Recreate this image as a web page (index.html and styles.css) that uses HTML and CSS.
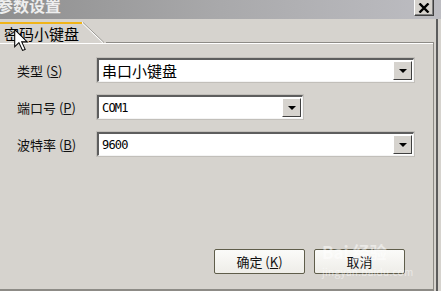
FILE: index.html
```html
<!DOCTYPE html>
<html>
<head>
<meta charset="utf-8">
<link rel="stylesheet" href="styles.css">
</head>
<body>
<div class="dialog">
  <div class="titlebar">
    <span class="title">参数设置</span>
    <span class="close"><svg width="12" height="10" viewBox="0 0 12 10"><path d="M1.5 0.5 L10.5 9.5 M10.5 0.5 L1.5 9.5" stroke="#000" stroke-width="2.4"/></svg></span>
  </div>
  <div class="content">
    <div class="panelwrap">
      <div class="tabstrip">
        <div class="tab">密码小键盘</div>
        <svg class="slant" width="24" height="24" viewBox="0 0 24 24"><path d="M0 3.5 L21 23.5" stroke="#ffffff" stroke-width="1.2"/><path d="M1 3.5 L22 23.5" stroke="#9a9892" stroke-width="1"/></svg>
        <div class="tabrest"></div>
      </div>
      <div class="panel">
        <div class="row">
          <span class="label">类型 (<u>S</u>)</span>
          <div class="combo wide"><span class="val cjk">串口小键盘</span><span class="btn"><i class="tri"></i></span></div>
        </div>
        <div class="row">
          <span class="label">端口号 (<u>P</u>)</span>
          <div class="combo narrow"><span class="val mono">COM1</span><span class="btn"><i class="tri"></i></span></div>
        </div>
        <div class="row">
          <span class="label">波特率 (<u>B</u>)</span>
          <div class="combo wide"><span class="val mono">9600</span><span class="btn"><i class="tri"></i></span></div>
        </div>
        <div class="buttons">
          <button class="pbtn">确定 (<u>K</u>)</button>
          <button class="pbtn">取消</button>
        </div>
      </div>
    </div>
    <div class="edge"></div>
  </div>
  <svg class="cursor" width="15" height="23" viewBox="0 0 14 22"><path d="M0.5 0.5 L0.5 17 L4.5 13 L8 20.5 L10.5 19.5 L7.2 12.3 L12.5 12.3 Z" fill="#fff" stroke="#000" stroke-width="1"/></svg>
  <div class="watermark"><span class="wm1">Bai 经验</span><span class="wm2">jingyan.baidu.com</span></div>
</div>
</body>
</html>
```

FILE: styles.css
```css
* { box-sizing: border-box; }
html, body { margin: 0; padding: 0; }
body {
  width: 441px;
  height: 291px;
  overflow: hidden;
  background: #d6d3ce;
  font-family: "Noto Sans CJK SC", "Liberation Sans", sans-serif;
}
.dialog {
  position: relative;
  width: 441px;
  height: 291px;
  display: flex;
  flex-direction: column;
}
.titlebar {
  height: 19px;
  flex: none;
  display: flex;
  justify-content: space-between;
  align-items: flex-start;
  background: linear-gradient(to right, #8f8f8f, #a9a9ab 50%, #bdbdc2);
  overflow: hidden;
}
.title {
  margin-left: -3px;
  margin-top: -5px;
  font-size: 16px;
  font-weight: bold;
  color: #eeeeee;
  line-height: 20px;
}
.close {
  width: 20px;
  height: 16px;
  margin-right: 7px;
  background: #d6d3ce;
  border-right: 1px solid #404040;
  border-bottom: 1px solid #404040;
  border-left: 1px solid #ffffff;
  box-shadow: inset -1px -1px #808080;
  display: flex;
  align-items: center;
  justify-content: center;
}
.content {
  flex: 1;
  display: flex;
  min-height: 0;
}
.panelwrap {
  width: 434px;
  flex: none;
  display: flex;
  flex-direction: column;
}
.tabstrip {
  height: 24px;
  flex: none;
  display: flex;
  align-items: stretch;
}
.tab {
  width: 82px;
  flex: none;
  margin-top: 3px;
  border-top: 2px solid #f0b418;
  font-size: 15px;
  line-height: 17px;
  padding-left: 4px;
  padding-top: 1px;
  color: #000;
  white-space: nowrap;
}
.slant { flex: none; }
.tabrest {
  flex: 1;
  border-bottom: 1px solid #8d8b86;
}
.panel {
  flex: 1;
  border-right: 1px solid #8d8b86;
  border-bottom: 2px solid #8d8b86;
  box-shadow: inset 0 1px #ffffff;
  padding: 15px 28px 15px 17px;
  display: flex;
  flex-direction: column;
  gap: 13px;
}
.row {
  display: flex;
  align-items: center;
  height: 24px;
}
.label {
  width: 80px;
  flex: none;
  font-size: 13px;
  color: #111;
  white-space: nowrap;
}
.label u, .pbtn u { text-decoration: underline; }
.combo {
  flex: none;
  height: 24px;
  display: flex;
  align-items: stretch;
  background: #ffffff;
  border-top: 2px solid #5e5e5e;
  border-left: 2px solid #5e5e5e;
  border-right: 1px solid #f4f4f4;
  border-bottom: 1px solid #f4f4f4;
  box-shadow: 0 0 0 1px #c2bfba;
}
.wide { width: 317px; }
.narrow { width: 206px; }
.val {
  flex: 1;
  padding-left: 3px;
  display: flex;
  align-items: center;
  color: #000;
}
.cjk { font-size: 15px; }
.mono { font-family: "DejaVu Sans Mono", "Liberation Mono", monospace; font-size: 12px; letter-spacing: -0.8px; }
.btn {
  width: 19px;
  margin: 1px;
  background: #d6d3ce;
  border-top: 1px solid #ffffff;
  border-left: 1px solid #ffffff;
  border-right: 1px solid #404040;
  border-bottom: 1px solid #404040;
  display: flex;
  align-items: center;
  justify-content: center;
}
.tri {
  width: 0;
  height: 0;
  border-left: 4px solid transparent;
  border-right: 4px solid transparent;
  border-top: 4px solid #000;
  margin-top: 1px;
}
.buttons {
  margin-top: auto;
  display: flex;
  justify-content: flex-end;
  gap: 9px;
}
.pbtn {
  width: 91px;
  height: 25px;
  font-family: "Noto Sans CJK SC", "Liberation Sans", sans-serif;
  font-size: 13px;
  color: #111;
  background: linear-gradient(#fbfbf9, #eeede8);
  border: 1px solid #5f5d4a;
  border-radius: 2px;
  padding: 0;
  line-height: 20px;
}
.edge {
  width: 2px;
  margin-left: 2px;
  background: #5c5c5c;
}
.cursor {
  position: absolute;
  left: 14px;
  top: 29px;
}
.watermark {
  position: absolute;
  left: 322px;
  top: 242px;
  width: 100px;
  display: flex;
  flex-direction: column;
  color: rgba(255,255,255,0.5);
  pointer-events: none;
}
.wm1 { font-size: 17px; font-weight: bold; line-height: 20px; }
.wm2 { font-size: 10px; line-height: 12px; margin-top: 4px; letter-spacing: 0.3px; }
```
